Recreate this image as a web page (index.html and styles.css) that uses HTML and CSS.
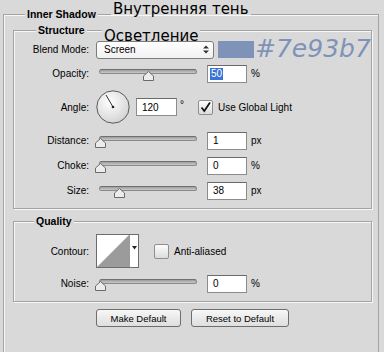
FILE: index.html
```html
<!DOCTYPE html>
<html lang="en">
<head>
  <meta charset="UTF-8">
  <meta name="viewport" content="width=device-width, initial-scale=1.0">
  <title>Inner Shadow</title>
  <link rel="stylesheet" href="styles.css">
</head>
<body>
  <fieldset class="panel">
    <legend class="panel-title">Inner Shadow</legend>

    <fieldset class="group structure">
      <legend>Structure</legend>

      <div class="row">
        <span class="label">Blend Mode:</span>
        <div class="select">
          <span>Screen</span>
          <svg class="select-arrows" width="6" height="9" viewBox="0 0 6 9">
            <path d="M0 3.5 L3 0.5 L6 3.5 Z M0 5.5 L3 8.5 L6 5.5 Z" fill="#333"/>
          </svg>
        </div>
        <div class="swatch"></div>
      </div>

      <div class="row gap-5">
        <span class="label">Opacity:</span>
        <div class="slider">
          <div class="track"></div>
          <svg class="thumb" style="left: 47px" width="11" height="10" viewBox="0 0 11 10">
            <path d="M0.5 9.5 V5 L5.5 0.5 L10.5 5 V9.5 Z" fill="#ececec" stroke="#6b6b6b"/>
          </svg>
        </div>
        <div class="field"><span class="selected">50</span></div>
        <span class="unit">%</span>
      </div>

      <div class="row angle-row gap-7">
        <span class="label">Angle:</span>
        <svg class="dial" width="34" height="34" viewBox="0 0 34 34">
          <defs>
            <radialGradient id="dialFill" cx="0.4" cy="0.35" r="0.7">
              <stop offset="0" stop-color="#ffffff"/>
              <stop offset="1" stop-color="#d2d2d2"/>
            </radialGradient>
          </defs>
          <circle cx="17" cy="17" r="16.2" fill="url(#dialFill)" stroke="#5a5a5a"/>
          <line x1="17" y1="17" x2="10" y2="5" stroke="#333" stroke-width="1"/>
          <circle cx="17" cy="17" r="1.3" fill="#222"/>
        </svg>
        <div class="field wide">120</div>
        <span class="deg">°</span>
        <span class="check">
          <svg width="13" height="13" viewBox="0 0 13 13">
            <path d="M2.5 6.5 L5.3 10 L11 1.5" fill="none" stroke="#111" stroke-width="1.7"/>
          </svg>
        </span>
        <span class="check-text">Use Global Light</span>
      </div>

      <div class="row gap-7">
        <span class="label">Distance:</span>
        <div class="slider">
          <div class="track"></div>
          <svg class="thumb" style="left: -1px" width="11" height="10" viewBox="0 0 11 10">
            <path d="M0.5 9.5 V5 L5.5 0.5 L10.5 5 V9.5 Z" fill="#ececec" stroke="#6b6b6b"/>
          </svg>
        </div>
        <div class="field">1</div>
        <span class="unit">px</span>
      </div>

      <div class="row gap-6">
        <span class="label">Choke:</span>
        <div class="slider">
          <div class="track"></div>
          <svg class="thumb" style="left: -1px" width="11" height="10" viewBox="0 0 11 10">
            <path d="M0.5 9.5 V5 L5.5 0.5 L10.5 5 V9.5 Z" fill="#ececec" stroke="#6b6b6b"/>
          </svg>
        </div>
        <div class="field">0</div>
        <span class="unit">%</span>
      </div>

      <div class="row gap-6">
        <span class="label">Size:</span>
        <div class="slider">
          <div class="track"></div>
          <svg class="thumb" style="left: 18px" width="11" height="10" viewBox="0 0 11 10">
            <path d="M0.5 9.5 V5 L5.5 0.5 L10.5 5 V9.5 Z" fill="#ececec" stroke="#6b6b6b"/>
          </svg>
        </div>
        <div class="field">38</div>
        <span class="unit">px</span>
      </div>
    </fieldset>

    <fieldset class="group quality">
      <legend>Quality</legend>

      <div class="row contour-row">
        <span class="label">Contour:</span>
        <div class="contour">
          <svg class="contour-curve" width="32" height="32" viewBox="0 0 32 32">
            <rect width="32" height="32" fill="#fff"/>
            <path d="M0 32 L32 0 L32 32 Z" fill="#9b9b9b"/>
          </svg>
          <div class="contour-arrow">
            <svg width="5" height="4" viewBox="0 0 5 4"><path d="M0 0 H5 L2.5 3.5 Z" fill="#222"/></svg>
          </div>
        </div>
        <span class="check empty"></span>
        <span class="check-text">Anti-aliased</span>
      </div>

      <div class="row gap-6">
        <span class="label">Noise:</span>
        <div class="slider">
          <div class="track"></div>
          <svg class="thumb" style="left: -1px" width="11" height="10" viewBox="0 0 11 10">
            <path d="M0.5 9.5 V5 L5.5 0.5 L10.5 5 V9.5 Z" fill="#ececec" stroke="#6b6b6b"/>
          </svg>
        </div>
        <div class="field">0</div>
        <span class="unit">%</span>
      </div>
    </fieldset>

    <div class="buttons">
      <button class="btn make">Make Default</button>
      <button class="btn reset">Reset to Default</button>
    </div>
  </fieldset>

  <div class="note note-title">Внутренняя тень</div>
  <div class="note note-mode">Осветление</div>
  <div class="note note-color">#7e93b7</div>
</body>
</html>
```

FILE: styles.css
```css
html, body {
  overflow: hidden;
}
body {
  margin: 0;
  height: 352px;
  background-color: #d9d9d9;
  font-family: "Liberation Sans", Arial, sans-serif;
  font-size: 10px;
  color: #000;
  position: relative;
}
fieldset {
  min-inline-size: 0;
}
legend {
  padding: 0 2px;
  font-weight: bold;
  font-size: 10.5px;
  line-height: 13px;
  background-color: #d9d9d9;
}
/* the outer frame runs on below the window, so no bottom edge */
.panel {
  box-sizing: border-box;
  height: 344px;
  margin: 8px 5px 0 3px;
  padding: 0;
  border: 1px solid #a3a3a3;
  border-bottom: none;
  box-shadow: inset 1px 1px 0 #f7f7f7;
}
.panel-title {
  margin-left: 21px;
}
.group {
  margin: 0 6px 0 9px;
  border: 1px solid #a3a3a3;
  box-shadow: inset 1px 1px 0 #f7f7f7, 1px 1px 0 #f7f7f7;
}
.structure {
  margin-top: 3px;
  padding: 3px 0 8px;
}
.structure legend {
  margin-left: 22px;
}
.quality {
  margin-top: 6px;
  padding: 6px 0 8px;
}
.quality legend {
  margin-left: 20px;
}
.row {
  display: flex;
  align-items: center;
  height: 19px;
}
.gap-5 {
  margin-top: 5px;
}
.gap-6 {
  margin-top: 6px;
}
.gap-7 {
  margin-top: 7px;
}
.label {
  width: 75px;
  margin-right: 7px;
  text-align: right;
  flex-shrink: 0;
}
.select {
  box-sizing: border-box;
  width: 118px;
  height: 18px;
  display: flex;
  align-items: center;
  justify-content: space-between;
  padding: 0 4px 0 7px;
  border: 1px solid #7c7c7c;
  border-radius: 3px;
  background: linear-gradient(#ffffff, #f1f1f1);
}
.swatch {
  width: 36px;
  height: 17px;
  margin-left: 4px;
  background-color: #7e93b7;
}
.slider {
  position: relative;
  width: 102px;
  height: 19px;
  margin-right: 9px;
  flex-shrink: 0;
}
.track {
  box-sizing: border-box;
  width: 98px;
  height: 5px;
  margin: 5px 0 0 3px;
  border: 1px solid #8a8a8a;
  border-top-color: #6f6f6f;
  border-radius: 3px;
  background: linear-gradient(#9d9d9d, #c9c9c9);
}
.thumb {
  position: absolute;
  top: 7px;
}
.field {
  box-sizing: border-box;
  width: 40px;
  height: 18px;
  padding-left: 5px;
  display: flex;
  align-items: center;
  background-color: #fff;
  border: 1px solid #8c8c8c;
  border-top-color: #6a6a6a;
  flex-shrink: 0;
}
.field.wide {
  width: 41px;
}
.selected {
  background-color: #3874d8;
  color: #fff;
  line-height: 12px;
  padding: 0 1px;
  margin-left: -3px;
}
.unit {
  margin-left: 4px;
}
.angle-row {
  height: 34px;
}
.dial {
  margin-right: 6px;
  flex-shrink: 0;
}
.deg {
  align-self: flex-start;
  margin: 9px 0 0 3px;
}
.check {
  box-sizing: border-box;
  width: 15px;
  height: 15px;
  margin-left: 14px;
  border: 1px solid #8e8e8e;
  border-radius: 2px;
  background: linear-gradient(#fdfdfd, #dcdcdc);
  display: flex;
  align-items: center;
  justify-content: center;
}
.check-text {
  margin-left: 5px;
}
.contour-row {
  height: 34px;
}
.contour {
  display: flex;
  height: 34px;
  border: 1px solid #6d6d6d;
  box-sizing: border-box;
}
.contour-curve {
  display: block;
}
.contour-arrow {
  width: 8px;
  border-left: 1px solid #9a9a9a;
  background-color: #fff;
  display: flex;
  align-items: center;
  justify-content: center;
  padding-bottom: 6px;
}
.contour-row .check {
  margin-left: 15px;
}
.buttons {
  display: flex;
  gap: 10px;
  margin-top: 7px;
  padding-left: 92px;
}
.btn {
  box-sizing: border-box;
  height: 18px;
  padding: 0;
  font-family: "Liberation Sans", Arial, sans-serif;
  font-size: 9.5px;
  color: #000;
  border: 1px solid #6e6e6e;
  border-radius: 3px;
  background: linear-gradient(#f7f7f7, #dedede);
}
.btn.make {
  width: 85px;
}
.btn.reset {
  width: 98px;
}
.note {
  position: absolute;
  font-family: "DejaVu Sans", Verdana, sans-serif;
  white-space: nowrap;
}
.note-title {
  left: 111px;
  top: 3px;
  height: 12px;
  padding: 0 2px;
  font-size: 15px;
  line-height: 12px;
  background-color: #d9d9d9;
}
.note-mode {
  left: 102px;
  top: 30px;
  height: 11px;
  padding: 0 2px;
  font-size: 15px;
  line-height: 12px;
  background-color: #d9d9d9;
}
.note-color {
  left: 255px;
  top: 36px;
  font-size: 25px;
  line-height: 25px;
  font-style: italic;
  color: #7e93b7;
}
```
